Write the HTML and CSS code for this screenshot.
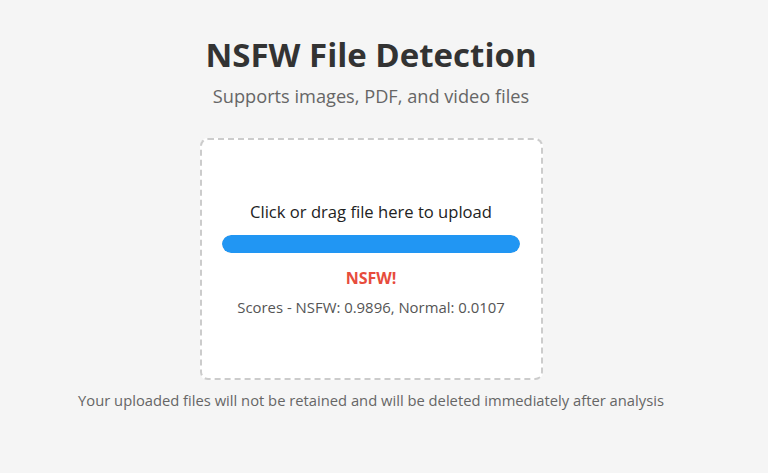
FILE: index.html
```html
<!DOCTYPE html>
<html lang="en">
<head>
<meta charset="utf-8">
<title>NSFW File Detection</title>
<link rel="stylesheet" href="styles.css">
</head>
<body>
<main class="page">
  <h1 class="title">NSFW File Detection</h1>
  <p class="subtitle">Supports images, PDF, and video files</p>
  <section class="dropzone">
    <p class="prompt">Click or drag file here to upload</p>
    <div class="progress"><div class="progress-fill" style="width:100%"></div></div>
    <p class="verdict">NSFW!</p>
    <p class="scores">Scores - NSFW: 0.9896, Normal: 0.0107</p>
  </section>
  <p class="note">Your uploaded files will not be retained and will be deleted immediately after analysis</p>
</main>
</body>
</html>
```

FILE: styles.css
```css
html, body {
  margin: 0;
  padding: 0;
  background: #f5f5f5;
}
body {
  font-family: "Open Sans", "Noto Sans", sans-serif;
  color: #333;
}
.page {
  width: 742px;
  display: flex;
  flex-direction: column;
  align-items: center;
  padding-top: 33px;
}
.title {
  margin: 0;
  font-size: 33px;
  font-weight: 700;
  color: #333;
  line-height: 44px;
}
.subtitle {
  margin: 7px 0 0;
  font-size: 18.2px;
  color: #666;
  line-height: 24px;
}
.dropzone {
  box-sizing: border-box;
  margin-top: 30px;
  width: 343px;
  height: 242px;
  background: #fff;
  border: 2px dashed #ccc;
  border-radius: 8px;
  display: flex;
  flex-direction: column;
  align-items: center;
  justify-content: center;
  padding: 0 20px;
}
.prompt {
  margin: 0;
  font-size: 16.6px;
  color: #222;
  line-height: 22px;
}
.progress {
  width: 298px;
  height: 18px;
  border-radius: 9px;
  background: #e0e0e0;
  margin-top: 12px;
  overflow: hidden;
}
.progress-fill {
  height: 100%;
  background: #2196f3;
  border-radius: 9px;
}
.verdict {
  margin: 14px 0 0;
  font-size: 16px;
  font-weight: 700;
  color: #e74c3c;
  line-height: 22px;
}
.scores {
  margin: 7px 0 0;
  font-size: 14.9px;
  color: #555;
  line-height: 22px;
}
.note {
  margin: 9px 0 0;
  font-size: 14.75px;
  color: #666;
  line-height: 22px;
}
```
